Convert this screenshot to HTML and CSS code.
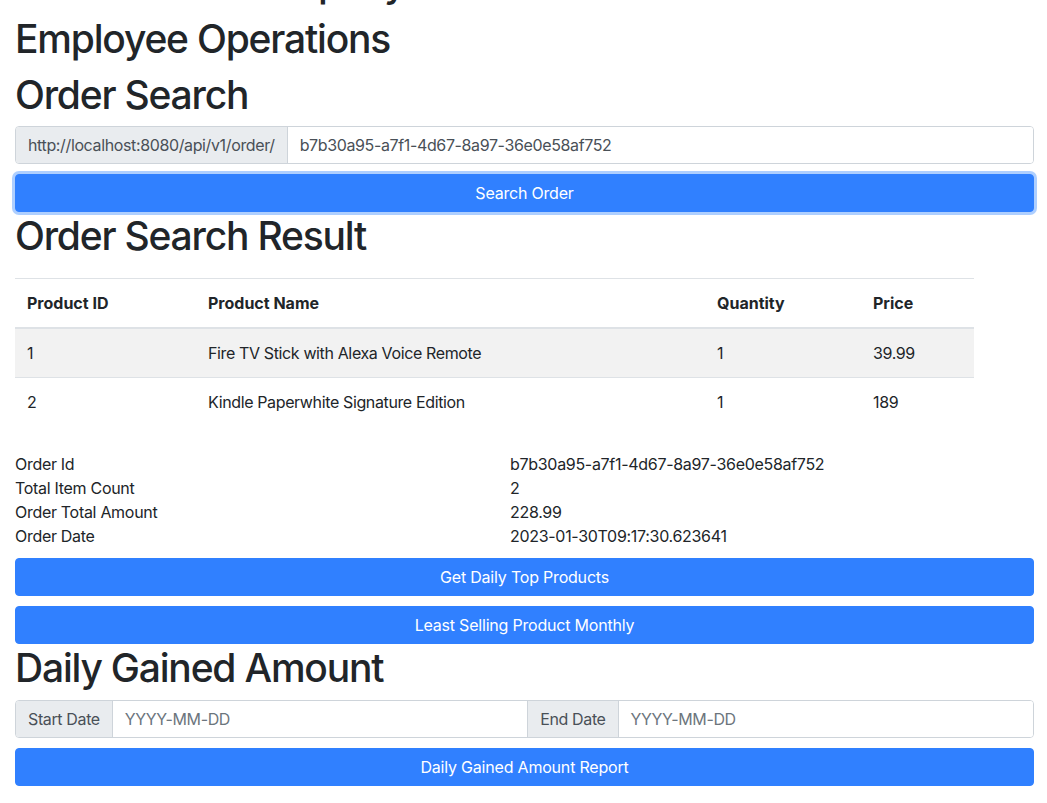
FILE: index.html
```html
<!DOCTYPE html>
<html lang="en">
<head>
<meta charset="utf-8">
<title>Employee Operations</title>
<link rel="stylesheet" href="styles.css">
</head>
<body>
<div class="page">
  <h1 class="title cut">Ecommerce Company</h1>
  <h1 class="title">Employee Operations</h1>
  <h1 class="title tight">Order Search</h1>
  <div class="input-group">
    <span class="addon">http://localhost:8080/api/v1/order/</span>
    <span class="field">b7b30a95-a7f1-4d67-8a97-36e0e58af752</span>
  </div>
  <button class="btn focused">Search Order</button>
  <h1 class="title">Order Search Result</h1>
  <table class="table">
    <colgroup>
      <col class="c1"><col class="c2"><col class="c3"><col class="c4">
    </colgroup>
    <thead>
      <tr><th>Product ID</th><th>Product Name</th><th>Quantity</th><th>Price</th></tr>
    </thead>
    <tbody>
      <tr class="striped"><td>1</td><td>Fire TV Stick with Alexa Voice Remote</td><td>1</td><td>39.99</td></tr>
      <tr><td>2</td><td>Kindle Paperwhite Signature Edition</td><td>1</td><td>189</td></tr>
    </tbody>
  </table>
  <div class="info">
    <div>Order Id</div><div>b7b30a95-a7f1-4d67-8a97-36e0e58af752</div>
    <div>Total Item Count</div><div>2</div>
    <div>Order Total Amount</div><div>228.99</div>
    <div>Order Date</div><div>2023-01-30T09:17:30.623641</div>
  </div>
  <button class="btn">Get Daily Top Products</button>
  <button class="btn">Least Selling Product Monthly</button>
  <h1 class="title">Daily Gained Amount</h1>
  <div class="input-group">
    <span class="addon">Start Date</span>
    <span class="field placeholder">YYYY-MM-DD</span>
    <span class="addon mid">End Date</span>
    <span class="field placeholder">YYYY-MM-DD</span>
  </div>
  <button class="btn">Daily Gained Amount Report</button>
</div>
</body>
</html>
```

FILE: styles.css
```css
* { box-sizing: border-box; }
html, body { margin: 0; padding: 0; background: #fff; }
body {
  font-family: Inter, "Noto Sans", "Liberation Sans", sans-serif;
  font-size: 16px;
  line-height: 24px;
  color: #212529;
}
.page {
  padding: 0 13px 0 15px;
  display: flex;
  flex-direction: column;
}
.title {
  margin: 0 0 8px 0;
  font-size: 39px;
  font-weight: 500;
  line-height: 48px;
  letter-spacing: -1.2px;
}
.title.tight { margin-bottom: 7px; }
.cut { margin-top: -41px; }
.input-group {
  display: flex;
  height: 38px;
  border: 1px solid #ced4da;
  border-radius: 4px;
  overflow: hidden;
}
.addon {
  background: #e9ecef;
  color: #495057;
  padding: 6px 12px;
  border-right: 1px solid #ced4da;
  white-space: nowrap;
  letter-spacing: -0.37px;
}
.addon.mid { border-left: 1px solid #ced4da; }
.field {
  flex: 1;
  padding: 6px 12px;
  color: #495057;
  background: #fff;
  letter-spacing: -0.37px;
}
.placeholder { color: #6c757d; }
.btn {
  display: block;
  width: 100%;
  height: 38px;
  margin-top: 10px;
  border: 1px solid #3080ff;
  border-radius: 4px;
  background: #3080ff;
  color: #fff;
  font-family: inherit;
  font-size: 16px;
  line-height: 24px;
  padding: 6px 12px;
  letter-spacing: -0.2px;
}
.focused {
  box-shadow: 0 0 0 3px rgba(120, 175, 255, 0.6);
}
.table {
  width: 959px;
  border-collapse: collapse;
  margin-top: 10px;
  margin-bottom: 26px;
}
.c1 { width: 181px; }
.c2 { width: 509px; }
.c3 { width: 156px; }
.c4 { width: 113px; }
.table th, .table td {
  text-align: left;
  padding: 12px;
  border-top: 1px solid #dee2e6;
  letter-spacing: -0.37px;
}
.table th {
  font-weight: 700;
  letter-spacing: 0;
  border-bottom: 2px solid #dee2e6;
}
.striped td { background: #f2f2f2; }
.info {
  display: grid;
  grid-template-columns: 495px 1fr;
  letter-spacing: -0.3px;
}
```
